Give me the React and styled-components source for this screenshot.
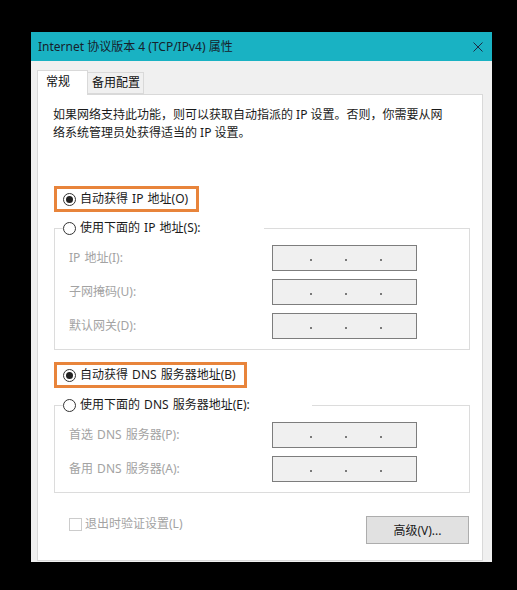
import React from 'react';
import styled, { createGlobalStyle } from 'styled-components';

const Global = createGlobalStyle`
  html, body { margin: 0; padding: 0; background: #000; }
  body {
    width: 517px; height: 590px; overflow: hidden;
    font-family: "Noto Sans", "Noto Sans CJK SC", sans-serif;
    font-size: 12px; color: #1a1a1a;
  }
`;

const Stage = styled.div`
  width: 517px; height: 590px; box-sizing: border-box;
  padding: 32px 0 0 31px; background: #000;
`;

const Window = styled.div`
  width: 461px; height: 530px; display: flex; flex-direction: column;
  background: #f0f0f0;
`;

const TitleBar = styled.div`
  height: 29px; flex: none; box-sizing: border-box;
  background: #19b2c3; display: flex; align-items: center;
  justify-content: space-between; padding: 0 9px 0 7px;
  color: #17212b; font-size: 12px; line-height: 16px;
`;

const CloseIcon = styled.svg`
  width: 10px; height: 10px; display: block;
`;

const Body = styled.div`
  flex: 1; display: flex; flex-direction: column; min-height: 0;
  padding: 9px 9px 1px 6px;
`;

const Tabs = styled.div`
  display: flex; align-items: flex-end; height: 25px; flex: none;
  position: relative; z-index: 1; margin-bottom: -1px;
`;

const Tab = styled.div`
  box-sizing: border-box;
  width: ${p => p.$w}px;
  height: ${p => (p.$active ? 25 : 22)}px;
  margin-bottom: ${p => (p.$active ? 0 : 1)}px;
  background: ${p => (p.$active ? '#fff' : '#f0f0f0')};
  border: 1px solid #d9d9d9;
  border-bottom: ${p => (p.$active ? 'none' : '1px solid #d9d9d9')};
  border-left: ${p => (p.$active ? '1px solid #d9d9d9' : 'none')};
  padding: ${p => (p.$active ? '2px 0 0 8px' : '1px 0 0 4px')};
  line-height: 18px; color: #111;
`;

const Panel = styled.div`
  flex: 1; background: #fff; border: 1px solid #d9d9d9;
  display: flex; flex-direction: column; align-items: flex-start;
  padding: 11px 12px 0 16px;
`;

const Intro = styled.p`
  margin: 0 0 0 -1px; line-height: 18px; color: #1a1a1a;
`;

const Highlight = styled.div`
  display: inline-flex; align-items: center; box-sizing: border-box;
  height: 26px; border: 3px solid #e8843b;
  padding: 0 8px 0 6px; margin-top: ${p => p.$mt}px;
`;

const Option = styled.label`
  display: flex; align-items: center; gap: 4px; line-height: 18px;
  color: #1a1a1a; white-space: nowrap; word-spacing: 1px;
`;

const RadioDot = styled.span`
  width: 13px; height: 13px; box-sizing: border-box; flex: none;
  border: 1px solid #333; border-radius: 50%; background: #fff;
  display: flex; align-items: center; justify-content: center;
  &::after {
    content: ''; width: 7px; height: 7px; border-radius: 50%;
    background: #222; display: ${p => (p.$checked ? 'block' : 'none')};
  }
`;

const Group = styled.fieldset`
  margin: ${p => p.$mt}px 0 0 0; width: 416px; box-sizing: border-box;
  border: 1px solid #dcdcdc; padding: 0 0 10px 8px; min-width: 0;
`;

const Legend = styled.legend`
  padding: 0; width: ${p => p.$w}px; height: 18px; display: flex; align-items: center;
`;

const Fields = styled.div`
  display: grid; row-gap: 8px; padding-top: 8px;
`;

const FieldRow = styled.div`
  display: grid; grid-template-columns: 209px 145px; align-items: center;
`;

const FieldLabel = styled.span`
  padding-left: 6px; color: #a3a3a3; line-height: 18px; word-spacing: 1px;
`;

const IpBox = styled.div`
  height: 26px; box-sizing: border-box; border: 1px solid #7d7d7d;
  background: #f0f0f0; display: flex; align-items: center;
  padding: 4px 0 0 37px; gap: 33px;
`;

const Dot = styled.span`
  width: 2px; height: 2px; background: #7a7a7a;
`;

const Footer = styled.div`
  margin-top: 23px; width: 416px; display: flex; align-items: flex-start;
  justify-content: space-between;
`;

const CheckOption = styled.label`
  display: flex; align-items: center; gap: 3px; padding-left: 15px;
  margin-top: -1px;
  color: #a3a3a3; line-height: 18px;
`;

const CheckBox = styled.span`
  width: 13px; height: 13px; box-sizing: border-box; border: 1px solid #cccccc;
  background: #fff;
`;

const Button = styled.button`
  width: 103px; height: 28px; box-sizing: border-box; margin-right: 1px;
  background: #e1e1e1; border: 1px solid #adadad; border-radius: 0;
  font-family: inherit; font-size: 12px; color: #1a1a1a; padding: 0;
`;

const IpInput = () => (
  <IpBox>
    <Dot />
    <Dot />
    <Dot />
  </IpBox>
);

const Radio = ({ checked, children }) => (
  <Option>
    <RadioDot $checked={checked} />
    <span>{children}</span>
  </Option>
);

export default function App() {
  return (
    <>
      <Global />
      <Stage>
        <Window>
          <TitleBar>
            <span>Internet 协议版本 4 (TCP/IPv4) 属性</span>
            <CloseIcon viewBox="0 0 10 10">
              <path d="M0.5 0.5 L9.5 9.5 M9.5 0.5 L0.5 9.5" stroke="#1d2b45" strokeWidth="1" fill="none" />
            </CloseIcon>
          </TitleBar>
          <Body>
            <Tabs>
              <Tab $active $w={51}>常规</Tab>
              <Tab $w={56}>备用配置</Tab>
            </Tabs>
            <Panel>
              <Intro>
                如果网络支持此功能，则可以获取自动指派的 IP 设置。否则，你需要从网
                <br />
                络系统管理员处获得适当的 IP 设置。
              </Intro>

              <Highlight $mt={44}>
                <Radio checked>自动获得 IP 地址(O)</Radio>
              </Highlight>

              <Group $mt={7}>
                <Legend $w={201}>
                  <Radio>使用下面的 IP 地址(S):</Radio>
                </Legend>
                <Fields>
                  <FieldRow>
                    <FieldLabel>IP 地址(I):</FieldLabel>
                    <IpInput />
                  </FieldRow>
                  <FieldRow>
                    <FieldLabel>子网掩码(U):</FieldLabel>
                    <IpInput />
                  </FieldRow>
                  <FieldRow>
                    <FieldLabel>默认网关(D):</FieldLabel>
                    <IpInput />
                  </FieldRow>
                </Fields>
              </Group>

              <Highlight $mt={12}>
                <Radio checked>自动获得 DNS 服务器地址(B)</Radio>
              </Highlight>

              <Group $mt={8}>
                <Legend $w={249}>
                  <Radio>使用下面的 DNS 服务器地址(E):</Radio>
                </Legend>
                <Fields>
                  <FieldRow>
                    <FieldLabel>首选 DNS 服务器(P):</FieldLabel>
                    <IpInput />
                  </FieldRow>
                  <FieldRow>
                    <FieldLabel>备用 DNS 服务器(A):</FieldLabel>
                    <IpInput />
                  </FieldRow>
                </Fields>
              </Group>

              <Footer>
                <CheckOption>
                  <CheckBox />
                  <span>退出时验证设置(L)</span>
                </CheckOption>
                <Button>高级(V)...</Button>
              </Footer>
            </Panel>
          </Body>
        </Window>
      </Stage>
    </>
  );
}
